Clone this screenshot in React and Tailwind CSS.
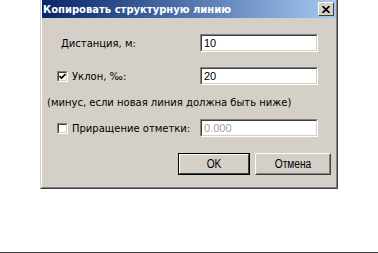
const font = { fontFamily: '"DejaVu Sans", Verdana, sans-serif' };

const Field = ({ value, disabled }) => (
  <div className="w-[118px] h-[18px] border border-t-[#808080] border-l-[#808080] border-r-white border-b-white">
    <div className="h-full border border-t-[#404040] border-l-[#404040] border-r-[#d4d0c8] border-b-[#d4d0c8] bg-white flex items-center px-[2px]">
      <span
        className={disabled ? "text-[11px] text-[#a0a0a0]" : "text-[11px] text-black"}
        style={{ fontFamily: '"Liberation Sans", Arial, sans-serif' }}
      >
        {value}
      </span>
    </div>
  </div>
);

const Check = ({ checked }) => (
  <div className="w-[11px] h-[11px] border border-t-[#808080] border-l-[#808080] border-r-white border-b-white">
    <div className="w-full h-full bg-white border border-t-[#404040] border-l-[#404040] border-r-[#d4d0c8] border-b-[#d4d0c8] flex items-center justify-center">
      {checked && (
        <svg width="7" height="7" viewBox="0 0 7 7">
          <path d="M0.5 3 L2.5 5 L6.5 1" stroke="black" strokeWidth="1.6" fill="none" />
        </svg>
      )}
    </div>
  </div>
);

const Button = ({ label, isDefault, width }) => (
  <div
    className={
      isDefault
        ? "h-[22px] border border-black"
        : "h-[22px] border border-t-white border-l-white border-r-[#404040] border-b-[#404040]"
    }
    style={{ width }}
  >
    <div
      className={
        isDefault
          ? "h-full border border-t-white border-l-white border-r-[#404040] border-b-[#404040]"
          : "h-full border border-t-[#d4d0c8] border-l-[#d4d0c8] border-r-[#808080] border-b-[#808080]"
      }
    >
      <div
        className="h-full flex items-center justify-center text-[12px] text-black scale-x-[0.85]"
        style={{ fontFamily: '"Liberation Sans", Arial, sans-serif' }}
      >
        {label}
      </div>
    </div>
  </div>
);

const App = () => {
  return (
    <div className="w-[378px] h-[253px] bg-white flex flex-col" style={font}>
      <div className="ml-[40px] w-[298px] h-[189px] border-l border-r border-b border-l-[#d4d0c8] border-r-[#404040] border-b-[#404040]">
        <div className="h-full border-l border-r border-b border-l-white border-r-[#808080] border-b-[#808080] bg-[#d4d0c8] flex flex-col">
          <div className="h-[18px] bg-gradient-to-r from-[#0a246a] to-[#a6caf0] flex items-center justify-between pl-[1px] pr-[2px]">
            <span className="text-[10px] font-bold text-white">Копировать структурную линию</span>
            <div className="w-[16px] h-[14px] bg-[#d4d0c8] border border-t-white border-l-white border-r-[#404040] border-b-[#404040] flex items-center justify-center">
              <svg width="8" height="7" viewBox="0 0 8 7">
                <path d="M0.5 0 L7.5 7 M7.5 0 L0.5 7" stroke="black" strokeWidth="1.7" />
              </svg>
            </div>
          </div>

          <div className="flex flex-col text-[10px] text-black">
            <div className="mt-[16px] flex items-center">
              <div className="w-[158px] pl-[19px]">Дистанция, м:</div>
              <Field value="10" />
            </div>

            <div className="mt-[15px] flex items-center">
              <div className="w-[158px] pl-[15px] flex items-center gap-[4px]">
                <Check checked />
                <span>Уклон, ‰:</span>
              </div>
              <Field value="20" />
            </div>

            <div className="mt-[10px] h-[14px] pl-[5px] flex items-center">
              (минус, если новая линия должна быть ниже)
            </div>

            <div className="mt-[10px] flex items-center">
              <div className="w-[158px] pl-[15px] flex items-center gap-[4px]">
                <Check />
                <span>Приращение отметки:</span>
              </div>
              <Field value="0.000" disabled />
            </div>

            <div className="mt-[16px] flex justify-end gap-[5px] pr-[5px]">
              <Button label="OK" isDefault width={72} />
              <Button label="Отмена" width={76} />
            </div>
          </div>
        </div>
      </div>
      <div className="flex-1" />
      <div className="h-px bg-[#404040]" />
    </div>
  );
};

export default App;
